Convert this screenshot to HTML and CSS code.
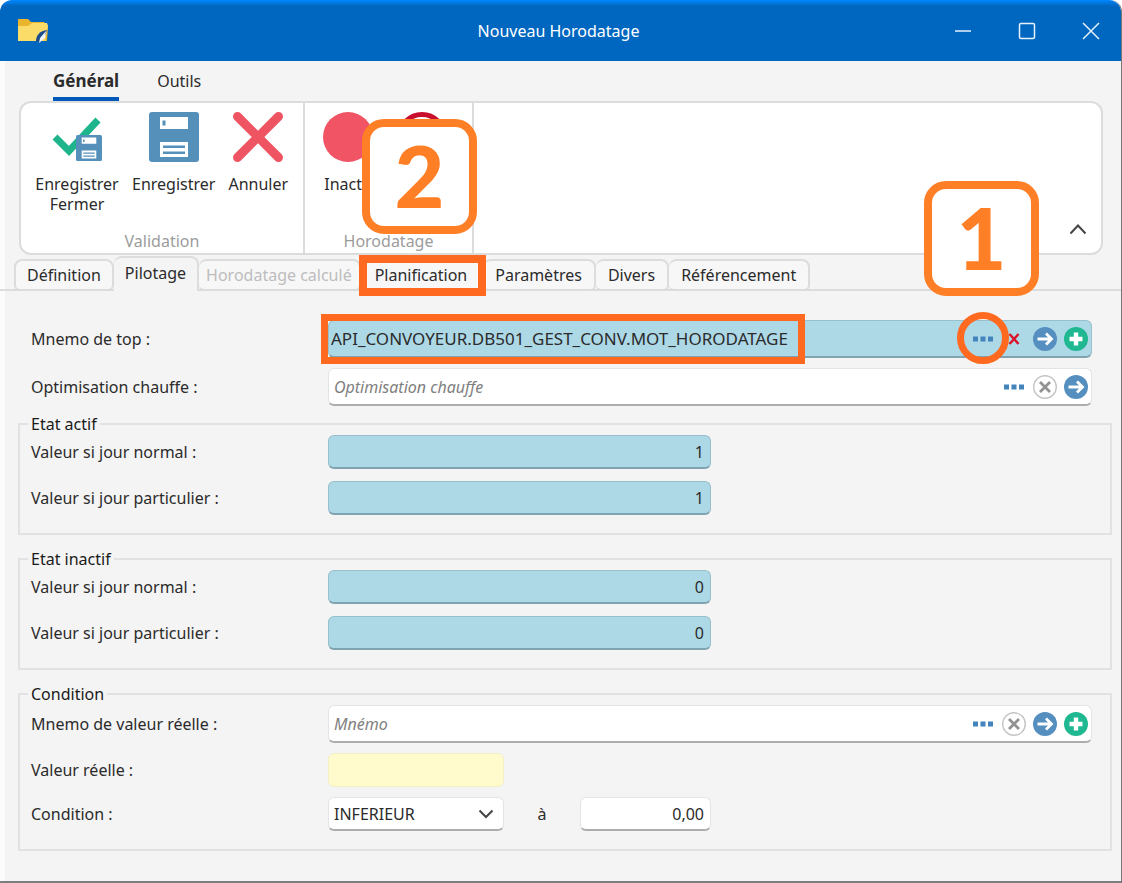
FILE: index.html
```html
<!DOCTYPE html>
<html lang="fr">
<head>
  <meta charset="UTF-8">
  <meta name="viewport" content="width=device-width, initial-scale=1">
  <title>Nouveau Horodatage</title>
  <link rel="stylesheet" href="styles.css">
</head>
<body>

  <!-- shared icons -->
  <svg class="defs" width="0" height="0">
    <symbol id="dots" viewBox="0 0 24 24">
      <path d="M2 9.500h5v5h-5zM9.500 9.500h5v5h-5zM17 9.500h5v5h-5z" fill="currentColor"/>
    </symbol>
    <symbol id="clear" viewBox="0 0 24 24">
      <circle cx="12" cy="12" r="11.300" fill="#fff" stroke="#c4c4c4" stroke-width="1.400"/>
      <path d="M7 7l10 10M17 7L7 17" stroke="#929292" stroke-width="2.800"/>
    </symbol>
    <symbol id="go" viewBox="0 0 24 24">
      <circle cx="12" cy="12" r="12" fill="#558fc0"/>
      <path d="M4.500 12h13M13 6.500l5.500 5.500-5.500 5.500" fill="none" stroke="#fff" stroke-width="2.800"/>
    </symbol>
    <symbol id="add" viewBox="0 0 24 24">
      <circle cx="12" cy="12" r="12" fill="#1fb891"/>
      <path d="M12 5.500v13M5.500 12h13" stroke="#fff" stroke-width="4.400"/>
    </symbol>
    <symbol id="disk" viewBox="0 0 50 50">
      <rect width="50" height="50" rx="3" fill="#5590bb"/>
      <path d="M11 5h28v12H11zM11 30h28v15H11z" fill="#fff"/>
      <path d="M13.500 8.500h3v5h-3zM14 33.500h22v2.500H14zM14 39.500h22v2.500H14z" fill="#5590bb"/>
    </symbol>
  </svg>

  <div class="window">
    <header>
      <svg class="app-icon" viewBox="0 0 32 26">
        <path d="M1 1h10l3 3h13l4 4-1 15H1z" fill="#e9b52c"/>
        <path d="M1 8h10l4-3h15l1 3-3 15H1z" fill="#fbdc69"/>
        <path d="M19 23c0-6 4-10 11-11l-2 6-5 6z" fill="#1b4d8d"/>
        <path d="M22 25l1-5 6-7-1 7z" fill="#eef4fb"/>
      </svg>
      <h1>Nouveau Horodatage</h1>
      <div class="window-buttons">
        <button type="button" aria-label="Réduire"><svg viewBox="0 0 18 18"><path d="M1 9h16"/></svg></button>
        <button type="button" aria-label="Agrandir"><svg viewBox="0 0 18 18"><rect x="1.500" y="1.500" width="15" height="15" rx="1.500"/></svg></button>
        <button type="button" aria-label="Fermer"><svg viewBox="0 0 18 18"><path d="M1 1l16 16M17 1L1 17"/></svg></button>
      </div>
    </header>

    <nav class="menu">
      <button type="button" class="active">Général</button>
      <button type="button">Outils</button>
    </nav>

    <div class="ribbon">
      <section class="group validation">
        <div class="group-buttons">
          <button type="button">
            <svg viewBox="0 0 50 50">
              <path d="M3 25l14 14L46 8" fill="none" stroke="#1fb58c" stroke-width="7"/>
              <use href="#disk" x="24" y="23" width="26" height="26"/>
            </svg>
            <span>Enregistrer Fermer</span>
          </button>
          <button type="button">
            <svg viewBox="0 0 50 50"><use href="#disk"/></svg>
            <span>Enregistrer</span>
          </button>
          <button type="button">
            <svg viewBox="0 0 50 50"><path d="M4.500 4.500l41 41M45.500 4.500l-41 41" stroke="#ef5463" stroke-width="9" stroke-linecap="round"/></svg>
            <span>Annuler</span>
          </button>
        </div>
        <h2>Validation</h2>
      </section>
      <section class="group horodatage">
        <div class="group-buttons">
          <button type="button">
            <svg viewBox="0 0 50 50"><circle cx="25" cy="25" r="25" fill="#f05465"/></svg>
            <span>Inactif</span>
          </button>
          <svg class="ring" viewBox="0 0 50 50"><circle cx="25" cy="25" r="22.500" fill="none" stroke="#c8102e" stroke-width="5"/></svg>
        </div>
        <h2>Horodatage</h2>
        <div class="callout step-2">2</div>
      </section>
      <button type="button" class="collapse" aria-label="Réduire le ruban">
        <svg viewBox="0 0 18 12"><path d="M1.500 10.500L9 2.500l7.500 8"/></svg>
      </button>
      <div class="callout step-1">1</div>
    </div>

    <div class="tabs" role="tablist">
      <button type="button" role="tab">Définition</button>
      <button type="button" role="tab" class="active" aria-selected="true">Pilotage</button>
      <button type="button" role="tab" disabled>Horodatage calculé</button>
      <button type="button" role="tab" class="marked">Planification</button>
      <button type="button" role="tab">Paramètres</button>
      <button type="button" role="tab">Divers</button>
      <button type="button" role="tab">Référencement</button>
    </div>

    <main>
      <div class="rows outer">
        <div class="row">
          <label for="top">Mnemo de top :</label>
          <div class="field lookup blue">
            <div class="value-mark"></div>
            <input type="text" id="top" class="mnemo" value="API_CONVOYEUR.DB501_GEST_CONV.MOT_HORODATAGE">
            <button type="button" class="circled" aria-label="Parcourir"><svg viewBox="0 0 24 24"><use href="#dots"/></svg></button>
            <button type="button" aria-label="Effacer"><svg viewBox="0 0 24 24"><path d="M7.500 7l9 10M16.500 7l-9 10" stroke="#d9142b" stroke-width="2.500"/></svg></button>
            <button type="button" aria-label="Ouvrir"><svg viewBox="0 0 24 24"><use href="#go"/></svg></button>
            <button type="button" aria-label="Ajouter"><svg viewBox="0 0 24 24"><use href="#add"/></svg></button>
          </div>
        </div>
        <div class="row">
          <label for="chauffe">Optimisation chauffe :</label>
          <div class="field lookup">
            <input type="text" id="chauffe" placeholder="Optimisation chauffe">
            <button type="button" aria-label="Parcourir"><svg viewBox="0 0 24 24"><use href="#dots"/></svg></button>
            <button type="button" aria-label="Effacer"><svg viewBox="0 0 24 24"><use href="#clear"/></svg></button>
            <button type="button" aria-label="Ouvrir"><svg viewBox="0 0 24 24"><use href="#go"/></svg></button>
          </div>
        </div>
      </div>

      <fieldset>
        <legend>Etat actif</legend>
        <div class="rows states">
          <div class="row">
            <label for="actif-normal">Valeur si jour normal :</label>
            <input type="text" id="actif-normal" class="field blue number" value="1">
          </div>
          <div class="row">
            <label for="actif-particulier">Valeur si jour particulier :</label>
            <input type="text" id="actif-particulier" class="field blue number" value="1">
          </div>
        </div>
      </fieldset>

      <fieldset>
        <legend>Etat inactif</legend>
        <div class="rows states">
          <div class="row">
            <label for="inactif-normal">Valeur si jour normal :</label>
            <input type="text" id="inactif-normal" class="field blue number" value="0">
          </div>
          <div class="row">
            <label for="inactif-particulier">Valeur si jour particulier :</label>
            <input type="text" id="inactif-particulier" class="field blue number" value="0">
          </div>
        </div>
      </fieldset>

      <fieldset>
        <legend>Condition</legend>
        <div class="rows">
          <div class="row">
            <label for="mnemo">Mnemo de valeur réelle :</label>
            <div class="field lookup">
              <input type="text" id="mnemo" placeholder="Mnémo">
              <button type="button" aria-label="Parcourir"><svg viewBox="0 0 24 24"><use href="#dots"/></svg></button>
              <button type="button" aria-label="Effacer"><svg viewBox="0 0 24 24"><use href="#clear"/></svg></button>
              <button type="button" aria-label="Ouvrir"><svg viewBox="0 0 24 24"><use href="#go"/></svg></button>
              <button type="button" aria-label="Ajouter"><svg viewBox="0 0 24 24"><use href="#add"/></svg></button>
            </div>
          </div>
          <div class="row">
            <label for="reelle">Valeur réelle :</label>
            <input type="text" id="reelle" class="field yellow" readonly>
          </div>
          <div class="row">
            <label for="condition">Condition :</label>
            <div class="compare">
              <div class="select">
                <select id="condition" class="field">
                  <option>INFERIEUR</option>
                </select>
                <svg viewBox="0 0 16 10"><path d="M1.500 1.500L8 8l6.500-6.500"/></svg>
              </div>
              <label for="seuil">à</label>
              <input type="text" id="seuil" class="field threshold" value="0,00">
            </div>
          </div>
        </div>
      </fieldset>
    </main>
  </div>

</body>
</html>
```
FILE: styles.css
```css
* {
  box-sizing: border-box;
}

body {
  margin: 0;
  background-color: #fff;
  color: #2b2b2b;
  font-family: "Noto Sans", "Open Sans", sans-serif;
  font-size: 16px;
  line-height: 20px;
}

button, input, select {
  font: inherit;
  color: inherit;
}

button {
  background: none;
  border: none;
  padding: 0;
}

.defs {
  position: absolute;
}

.window {
  min-height: 100vh;
  background-color: #f4f4f4;
  border-right: 1px solid #777;
  border-bottom: 2px solid #7d7d7d;
  border-radius: 12px 12px 0 0;
  box-shadow: inset 5px 0 0 #fcfcfc;
}

/* title bar */
header {
  display: grid;
  grid-template-columns: 1fr auto 1fr;
  align-items: center;
  height: 61px;
  padding: 0 21px 0 17px;
  background: linear-gradient(#0088ff, #0067c0 6px);
  border-radius: 12px 12px 0 0;
  color: #fff;
}

header h1 {
  margin: 0;
  font-size: 16px;
  font-weight: normal;
}

.app-icon {
  width: 32px;
  height: 26px;
}

.window-buttons {
  display: flex;
  justify-content: flex-end;
  gap: 46px;
}

.window-buttons button {
  height: 18px;
}

.window-buttons svg {
  display: block;
  width: 18px;
  height: 18px;
  fill: none;
  stroke: #e6f2fc;
  stroke-width: 1.5;
}

/* ribbon */
.menu {
  display: flex;
  gap: 38px;
  height: 40px;
  padding: 0 53px;
}

.menu button {
  padding-top: 4px;
  border-bottom: 4px solid transparent;
}

.menu .active {
  border-image: linear-gradient(#0058b8, #0058b8) 1;
  font-size: 17px;
  font-weight: bold;
}

.ribbon {
  position: relative;
  display: flex;
  height: 154px;
  margin: 0 18px 0 19px;
  background-color: #fff;
  border: 2px solid #dcdcdc;
  border-radius: 12px;
}

.group {
  position: relative;
  display: flex;
  flex-direction: column;
  justify-content: space-between;
  border-right: 2px solid #dcdcdc;
}

.validation {
  width: 284px;
}

.horodatage {
  width: 169px;
}

.group h2 {
  margin: 0;
  color: #9c9c9c;
  font-size: 16px;
  font-weight: normal;
  line-height: 24px;
  text-align: center;
}

.group-buttons {
  display: flex;
  align-items: flex-start;
  gap: 13px;
  padding: 9px 14px;
}

.horodatage .group-buttons {
  gap: 24px;
  padding: 9px 18px;
}

.group-buttons button {
  display: flex;
  flex-direction: column;
  align-items: center;
  gap: 12px;
  max-width: 84px;
}

.horodatage button {
  width: 50px;
}

.group-buttons svg {
  width: 50px;
  height: 50px;
}

.collapse {
  align-self: flex-end;
  height: 12px;
  margin: 0 14px 18px auto;
}

.collapse svg {
  display: block;
  width: 18px;
  height: 12px;
  fill: none;
  stroke: #444;
  stroke-width: 2;
}

/* numbered steps */
.callout {
  position: absolute;
  z-index: 2;
  width: 115px;
  height: 115px;
  background-color: #fff;
  border: 8px solid #ff7f27;
  border-radius: 22px;
  color: #ff7f27;
  font-family: Lato, sans-serif;
  font-size: 86px;
  font-weight: 900;
  line-height: 96px;
  text-align: center;
}

.step-1 {
  top: 78px;
  right: 62px;
}

.step-2 {
  top: 16px;
  left: 57px;
}

/* tabs */
.tabs {
  display: flex;
  align-items: flex-end;
  height: 36px;
  padding-left: 14px;
  border-bottom: 2px solid #dcdcdc;
}

.tabs button {
  position: relative;
  height: 32px;
  padding: 0 11px;
  background-color: #f7f7f7;
  border: 2px solid #dcdcdc;
  border-left-width: 0;
  border-radius: 8px 8px 6px 6px;
  margin-bottom: -2px;
}

.tabs button:first-child {
  border-left-width: 2px;
}

.tabs .active {
  height: 35px;
  padding-bottom: 4px;
  background-color: #f4f4f4;
  border-bottom: none;
  border-radius: 8px 8px 0 0;
}

.tabs button:disabled {
  padding: 0 7px;
  color: #bdbdbd;
}

.tabs .marked {
  padding: 0 14px;
}

.marked ~ button {
  padding: 0 12px;
}

.marked::after {
  content: "";
  position: absolute;
  inset: -6px -5px -7px -2px;
  z-index: 1;
  border: 8px solid #ff6a20;
}

/* form */
main {
  padding: 29px 9px 28px 18px;
}

.rows {
  display: flex;
  flex-direction: column;
  gap: 10px;
}

.outer {
  padding: 0 20px 7px 13px;
}

.states {
  gap: 12px;
}

.row {
  display: grid;
  grid-template-columns: 297px 1fr;
  align-items: center;
}

fieldset {
  min-width: 0;
  margin: 0 0 13px;
  padding: 0 18px 18px 11px;
  border: 2px solid #e2e2e2;
}

fieldset:last-child {
  margin-bottom: 0;
}

legend {
  margin-left: -3px;
  padding: 0 3px;
  line-height: 22px;
  color: #1a1a1a;
}

.field {
  height: 34px;
  min-width: 0;
  padding: 0 6px;
  background-color: #fff;
  border: 1px solid #e4e4e4;
  border-bottom: 2px solid #adadad;
  border-radius: 6px;
}

.lookup {
  position: relative;
  display: flex;
  align-items: center;
  gap: 7px;
  height: 38px;
  padding: 0 3px 0 5px;
}

.lookup input {
  flex: 1;
  min-width: 0;
  padding: 0;
  background: none;
  border: none;
}

.lookup input::placeholder {
  color: #808080;
  font-style: italic;
}

.lookup button {
  position: relative;
  width: 24px;
  height: 24px;
  color: #4384bd;
}

.lookup svg {
  display: block;
  width: 24px;
  height: 24px;
}

.blue {
  background-color: #add8e6;
  border-color: #98bfcc;
  border-bottom-color: #7fa3b0;
}

.yellow {
  width: 176px;
  background-color: #fffbcc;
  border: 1px solid #f3efc6;
}

.number {
  width: 383px;
  text-align: right;
}

.lookup .mnemo {
  font-size: 17px;
  margin-left: -3px;
}

.value-mark {
  position: absolute;
  top: -7px;
  left: -8px;
  width: 484px;
  height: 50px;
  border: 7px solid #ff6a20;
  pointer-events: none;
}

.circled::after {
  content: "";
  position: absolute;
  inset: -15px -14px -13px;
  z-index: 1;
  border: 7px solid #ff6a20;
  border-radius: 50%;
}

.compare {
  display: flex;
  align-items: center;
}

.compare label {
  width: 76px;
  text-align: center;
}

.select {
  position: relative;
}

.select select {
  width: 176px;
  padding: 0 5px;
  appearance: none;
}

.select svg {
  position: absolute;
  top: 12px;
  right: 10px;
  width: 16px;
  height: 10px;
  fill: none;
  stroke: #444;
  stroke-width: 2;
  pointer-events: none;
}

.threshold {
  width: 131px;
  text-align: right;
}
```
